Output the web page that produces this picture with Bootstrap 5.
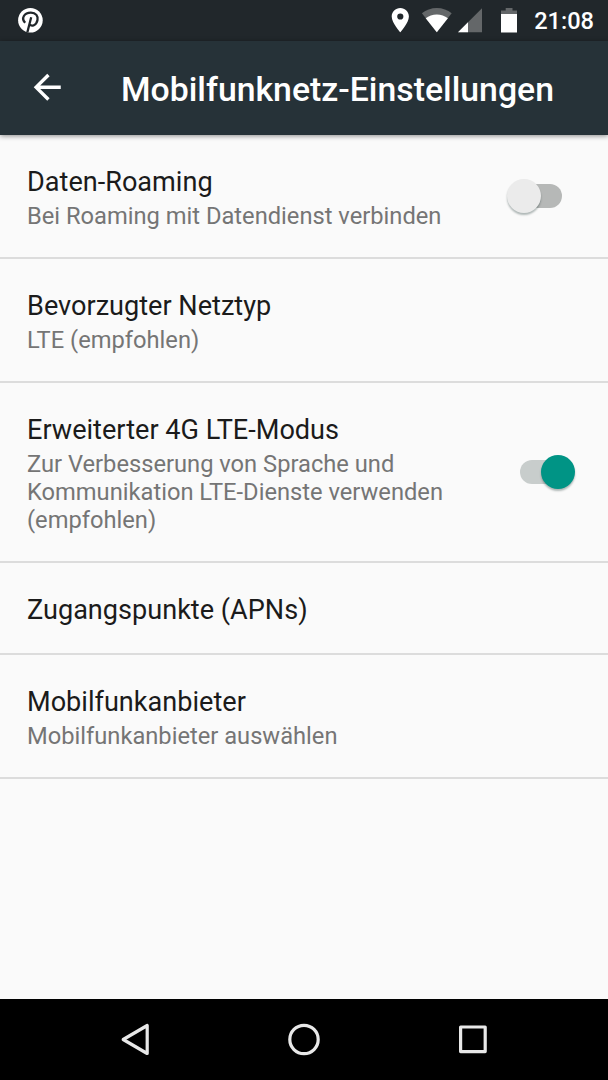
<!DOCTYPE html>
<html lang="de">
<head>
<meta charset="utf-8">
<meta name="viewport" content="width=device-width, initial-scale=1">
<title>Mobilfunknetz-Einstellungen</title>
<link href="https://cdn.jsdelivr.net/npm/bootstrap@5.3.0/dist/css/bootstrap.min.css" rel="stylesheet">
<style>
body{font-family:Roboto,"Noto Sans",sans-serif;background:#fafafa;height:1080px;overflow:hidden}
svg{display:block;flex-shrink:0}
.status-bar{height:41px;background:#21272b;color:#fff;padding:0 14px 0 18px}
.clock{font-weight:500;font-size:23.6px;line-height:28px;margin-left:16px;padding-top:1px}
.status-icons{margin-left:auto}
.app-bar{height:94px;background:#263238;color:#fff;box-shadow:0 1px 5px rgba(0,0,0,.45);z-index:1;padding-left:27px}
.back-arrow{margin-bottom:1px}
.app-title{font-size:33.8px;font-weight:500;line-height:40px;margin:3px 0 0 53px}
.list-group-flush>.setting,.list-group-flush>.setting:last-child{border:0;border-bottom:2px solid #dcdcdc;background:#fafafa;padding:28px 27px 27px}
.setting-title{font-size:27.1px;line-height:32px;padding-top:3px;color:#1b1b1b}
.setting-text{font-size:23.7px;line-height:28px;padding-top:4px;color:#757575}
.toggle{width:56px;height:34px;display:flex;align-items:center;flex-shrink:0;border-radius:17px;margin-bottom:2px}
.toggle::before{content:"";width:42px;height:24px;border-radius:12px;background:#b6b8b7;margin-left:13px}
.toggle::after{content:"";width:34px;height:34px;border-radius:50%;background:#ebebeb;margin-left:-55px;box-shadow:0 2px 2px rgba(0,30,25,.3);position:relative}
.toggle.is-on::before{background:#c8cdcc;margin-left:0}
.toggle.is-on::after{background:#009485;margin-left:-21px}
.toggle-off-place{margin-right:18px}
.toggle-on-place{margin-right:5px}
.nav-keys{height:81px;background:#000}
</style>
<script src="https://cdn.jsdelivr.net/npm/bootstrap@5.3.0/dist/js/bootstrap.bundle.min.js"></script>
</head>
<body class="d-flex flex-column">
<header class="status-bar d-flex align-items-center flex-shrink-0">
<svg width="26" height="41" viewBox="18 0 26 41"><circle cx="30.400" cy="20.300" r="12.300" fill="#fff"/><path d="M25.200 22.700C20.800 18.300 24.200 12.600 30.900 12.600C36 12.600 38.300 16.200 37.500 20C36.400 25.500 31.600 26.900 29.500 24.300M31.200 17.200L27.300 32.500" fill="none" stroke="#21272b" stroke-width="2.300"/></svg>
<svg class="status-icons" width="128" height="41" viewBox="390 0 128 41">
<path fill="#fff" fill-rule="evenodd" d="M400.300 8c-4.750 0-8.600 3.800-8.600 8.500 0 6.400 8.600 15.800 8.600 15.800s8.600-9.400 8.600-15.800c0-4.700-3.850-8.500-8.600-8.500zm0 11.600a3.100 3.100 0 1 1 0-6.200 3.100 3.100 0 0 1 0 6.200z"/>
<path fill="#646769" d="M436.800 32.300L421.900 13.300C426 10 431.200 8 436.800 8s10.800 2 14.900 5.300z"/>
<path fill="#fff" d="M436.800 32.300L425.700 18.200C428.800 15.900 432.600 14.500 436.800 14.500s8 1.400 11.100 3.700z"/>
<path fill="#646769" d="M482 8.300V32.300H458z"/><path fill="#fff" d="M468 22.300V32.300H458z"/>
<path fill="#646769" d="M501 14V10.500H505.700V8H512.500V10.500H517V14z"/><path fill="#fff" d="M501 14H517V32.500H501z"/>
</svg>
<span class="clock">21:08</span>
</header>
<nav class="app-bar d-flex align-items-center flex-shrink-0 position-relative">
<svg class="back-arrow" width="41" height="41" viewBox="0 0 24.300 24.300"><path fill="#fff" d="M20 11H7.830l5.590-5.590L12 4l-8 8 8 8 1.410-1.410L7.830 13H20v-2z"/></svg>
<h1 class="app-title">Mobilfunknetz-Einstellungen</h1>
</nav>
<main class="flex-grow-1">
<div class="list-group list-group-flush">
<div class="list-group-item setting d-flex align-items-center justify-content-between"><div><div class="setting-title">Daten-Roaming</div><div class="setting-text">Bei Roaming mit Datendienst verbinden</div></div><span class="toggle toggle-off-place" role="switch" aria-checked="false"></span></div>
<div class="list-group-item setting"><div class="setting-title">Bevorzugter Netztyp</div><div class="setting-text">LTE (empfohlen)</div></div>
<div class="list-group-item setting d-flex align-items-center justify-content-between"><div><div class="setting-title">Erweiterter 4G LTE-Modus</div><div class="setting-text">Zur Verbesserung von Sprache und<br>Kommunikation LTE-Dienste verwenden<br>(empfohlen)</div></div><span class="toggle is-on toggle-on-place" role="switch" aria-checked="true"></span></div>
<div class="list-group-item setting"><div class="setting-title">Zugangspunkte (APNs)</div></div>
<div class="list-group-item setting"><div class="setting-title">Mobilfunkanbieter</div><div class="setting-text">Mobilfunkanbieter auswählen</div></div>
</div>
</main>
<footer class="nav-keys d-flex align-items-center justify-content-center flex-shrink-0">
<svg width="368" height="40" viewBox="120 1020 368 40" fill="none" stroke="#e8e8e8" stroke-width="3.200" stroke-linejoin="round">
<path d="M147.200 1025.500V1053.500L123.200 1039.500z"/><circle cx="304" cy="1039.500" r="14.200"/><rect x="460.600" y="1027" width="24.600" height="24.600"/>
</svg>
</footer>
</body></html>
